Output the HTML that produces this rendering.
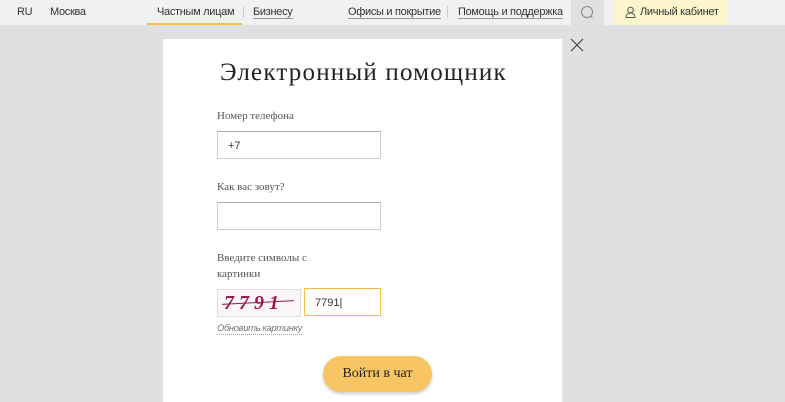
<!DOCTYPE html>
<html><head><meta charset="utf-8"><style>
*{margin:0;padding:0;box-sizing:border-box}
body{width:785px;height:402px;overflow:hidden;background:#dfe0e2;font-family:"Liberation Sans",sans-serif;position:relative;color:#333}
.top{position:absolute;left:0;top:0;width:785px;height:25px;background:#f0f1f3}
.t{position:absolute;top:6px;font-size:11px;color:#333;letter-spacing:-0.3px}
.u{border-bottom:1px solid #999}
.sep{position:absolute;top:6px;width:1px;height:12px;background:#ccc}
.card{position:absolute;left:163px;top:39px;width:399px;height:363px;background:#fff}
h1{position:absolute;left:220px;top:59px;font-family:"Liberation Serif",serif;font-weight:normal;font-size:25px;color:#222;letter-spacing:1.2px}
.lbl{position:absolute;left:217px;font-family:"Liberation Serif",serif;font-size:11px;color:#555;line-height:16px}
.in{position:absolute;left:217px;width:164px;height:28px;border:1px solid #ccc;border-top-color:#aaa;font-size:11px;padding:8px 10px}
</style></head><body>
<div class="top"></div>
<div class="t" style="left:17px">RU</div>
<div class="t" style="left:50px">Москва</div>
<div class="t" style="left:157px">Частным лицам</div>
<div style="position:absolute;left:147px;top:23px;width:95px;height:2px;background:#f5be44"></div>
<div class="sep" style="left:243px"></div>
<div class="t u" style="left:253px">Бизнесу</div>
<div class="t u" style="left:348px">Офисы и покрытие</div>
<div class="sep" style="left:447px"></div>
<div class="t u" style="left:458px">Помощь и поддержка</div>
<div style="position:absolute;left:571px;top:0;width:33px;height:25px;background:#dfe0e2"></div>
<svg style="position:absolute;left:580px;top:5px" width="15" height="15" viewBox="0 0 15 15"><circle cx="7" cy="7" r="5.5" fill="none" stroke="#888" stroke-width="1"/><path d="M10.5 11l2 2" stroke="#888"/></svg>
<div style="position:absolute;left:614px;top:0;width:113px;height:25px;background:#fdf6cc"></div>
<svg style="position:absolute;left:625px;top:6px" width="11" height="12" viewBox="0 0 11 12"><circle cx="5.5" cy="4" r="2.8" fill="none" stroke="#555"/><path d="M1 11.5c0-3 2-4.5 4.5-4.5s4.5 1.5 4.5 4.5z" fill="none" stroke="#555"/></svg>
<div class="t" style="left:640px">Личный кабинет</div>
<svg style="position:absolute;left:570px;top:38px" width="14" height="14"><path d="M1 1L13 13M13 1L1 13" stroke="#444" stroke-width="1.2"/></svg>
<div class="card"></div>
<h1>Электронный помощник</h1>
<div class="lbl" style="top:108px">Номер телефона</div>
<div class="in" style="top:131px">+7</div>
<div class="lbl" style="top:179px">Как вас зовут?</div>
<div class="in" style="top:202px"></div>
<div class="lbl" style="top:250px">Введите символы с<br>картинки</div>
<div style="position:absolute;left:217px;top:289px;width:84px;height:28px;border:1px solid #ddd;background:#fbf7f8;font-family:'Liberation Serif',serif;font-style:italic;font-weight:bold;font-size:20px;color:#a0174e;padding:0 6px;letter-spacing:5px;line-height:26px">7791</div>
<div style="position:absolute;left:222px;top:302px;width:72px;height:1px;background:#a0174e;transform:rotate(-3deg)"></div>
<div class="in" style="left:304px;top:288px;width:77px;border:1px solid #f5be44">7791|</div>
<div style="position:absolute;left:217px;top:323px;font-size:9.5px;font-style:italic;color:#777;border-bottom:1px dotted #999;letter-spacing:-0.4px">Обновить картинку</div>
<div style="position:absolute;left:323px;top:356px;width:109px;height:36px;border-radius:18px;background:#f8c565;box-shadow:0 2px 3px rgba(0,0,0,.2);font-family:'Liberation Serif',serif;font-size:14px;color:#222;text-align:center;line-height:36px">Войти в чат</div>
</body></html>
